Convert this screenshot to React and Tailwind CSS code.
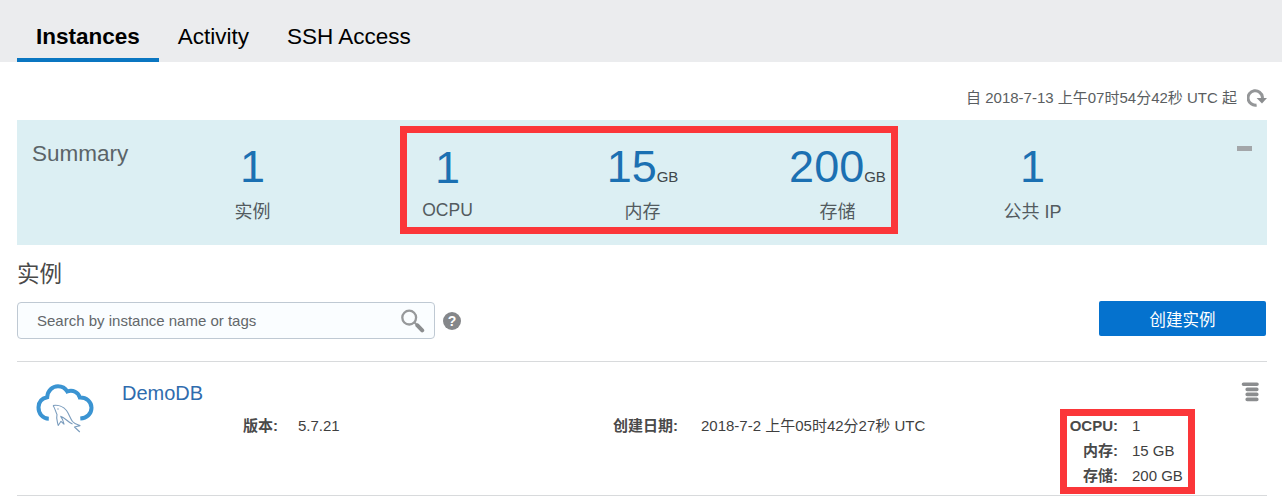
const metrics = [
  { value: '1', label: '实例' },
  { value: '1', label: 'OCPU', latin: true },
  { value: '15', unit: 'GB', label: '内存' },
  { value: '200', unit: 'GB', label: '存储' },
  { value: '1', label: '公共 IP' },
];

function Tabs() {
  return (
    <nav className="flex h-[62px] bg-[#ebecee] pl-[17px] text-[22.5px] leading-7 text-black">
      <div className="border-b-4 border-[#0a76c1] px-[19px] pt-[23px] font-bold">Instances</div>
      <div className="pr-[19px] pl-[19px] pt-[23px]">Activity</div>
      <div className="pl-[19px] pt-[23px]">SSH Access</div>
    </nav>
  );
}

function RefreshIcon() {
  return (
    <svg className="h-5 w-5" viewBox="0 0 20 20" fill="none">
      <path d="M9.6 17A7.2 7.2 0 1 1 15.4 9V11" stroke="#949698" strokeWidth="3" />
      <path d="M9.6 10H20L15 15.4Z" fill="#8b8d8f" />
    </svg>
  );
}

function SearchIcon() {
  return (
    <svg className="h-6 w-6" viewBox="0 0 24 24" fill="none">
      <circle cx="8.2" cy="8.6" r="6.9" stroke="#97999b" strokeWidth="2.3" />
      <path d="M13.5 13.5L16 16" stroke="#97999b" strokeWidth="2" />
      <path d="M16.4 16.4L21.2 21.4" stroke="#8b8d8f" strokeWidth="4" strokeLinecap="round" />
    </svg>
  );
}

function CloudIcon() {
  return (
    <svg className="h-[52px] w-[60px]" viewBox="0 0 60 52" fill="none">
      <path
        d="M13.8 36.8C7.5 36.6 3.4 31.4 3.5 25.3C3.6 19.5 7.5 16.2 12.2 15.2C12.6 8.5 17.4 4.3 23 4.3C27.2 4.3 30.3 6.2 32.3 9.5C37.8 7.4 43.3 10.4 44.8 15.4C51.3 15.2 56.5 19.6 56.5 25.8C56.5 31.7 51.9 36.2 45.3 36.6"
        stroke="#3b94d2"
        strokeWidth="4"
      />
      <path
        d="M18 23.5C23 22.6 28.5 24.8 31.5 28.5C34 32 35 36 37.5 39.5C39.5 42 42 42.5 45 43.6L39.5 45L44.8 50M18 23.5C20 26 20.5 29.5 22 32.5C20.8 36.8 22.5 40 23.2 43.5L26 39.3L29 42.2C28.3 38.5 27 36 25.5 34.2M25.5 34.2C30 35.5 32.5 40 37.5 42"
        stroke="#7a9cbd"
        strokeWidth="1.1"
        strokeLinejoin="round"
      />
      <circle cx="23" cy="27" r="0.7" fill="#7a9cbd" />
    </svg>
  );
}

function MenuIcon() {
  return (
    <svg className="h-5 w-[18px]" viewBox="0 0 18 20" stroke="#8b8d8f" strokeWidth="3.6" strokeLinecap="round">
      <path d="M2.5 2.3H16M6.2 7.4H15.8M6.2 12.4H15.8M6.2 17.4H15.8" />
    </svg>
  );
}

function Summary() {
  return (
    <section className="relative mr-[15px] ml-[17px] flex h-[125px] bg-[#dceff3]">
      <h2 className="w-[138px] pt-5 pl-[15px] text-[22.5px] leading-7 text-[#5b6468]">Summary</h2>
      {metrics.map((m, i) => (
        <div key={i} className="w-[195px] text-center">
          <div className={m.latin ? 'pt-[25px] text-[45px] leading-[45px] text-[#1b70b2]' : 'pt-6 text-[45px] leading-[45px] text-[#1b70b2]'}>
            {m.value}
            {m.unit && <span className="text-[15px] leading-none text-[#40474b]">{m.unit}</span>}
          </div>
          <div className={m.latin ? 'mt-2 text-[17.5px] leading-6 text-[#535b5f]' : 'mt-[11px] text-[18px] leading-6 text-[#535b5f]'}>
            {m.label}
          </div>
        </div>
      ))}
      <div className="mt-[26px] ml-auto mr-[15px] h-[5px] w-[15px] bg-[#a3a6a9]" />
      <div className="absolute top-[6px] left-[383px] h-[108px] w-[498px] border-[7px] border-[#fb3639]" />
    </section>
  );
}

function Field({ label, value }) {
  return (
    <>
      <dt className="text-right font-bold text-[#4a4a4a]">{label}</dt>
      <dd className="text-[#3f3f3f]">{value}</dd>
    </>
  );
}

export default function App() {
  return (
    <main className="h-[504px] w-[1282px] overflow-hidden bg-white font-['Liberation_Sans','Noto_Sans_CJK_SC',sans-serif]">
      <Tabs />
      <div className="flex h-[58px] justify-end pt-[26px] pr-[15px] text-[15px] leading-5 text-[#5a5e61]">
        <span className="mr-[10px]">自 2018-7-13 上午07时54分42秒 UTC 起</span>
        <RefreshIcon />
      </div>
      <Summary />
      <h2 className="h-[57px] pt-4 pl-[17px] text-[22.5px] leading-7 text-[#4a4a4a]">实例</h2>
      <div className="flex h-[59px] pr-4 pl-[17px]">
        <div className="flex h-[37px] w-[418px] items-center justify-between rounded border border-[#bfc9d3] bg-[#fafdff] pr-[9px] pl-[19px] text-[15px] text-[#63676a]">
          <span className="pt-0.5">Search by instance name or tags</span>
          <SearchIcon />
        </div>
        <div className="mt-[10px] ml-2 flex h-[18px] w-[18px] items-center justify-center rounded-full bg-[#85878a] text-[14px] leading-none font-bold text-white">
          ?
        </div>
        <button className="-mt-px ml-auto h-[35px] w-[167px] rounded-[2px] bg-[#0572ce] pt-0.5 text-[16.5px] leading-6 text-white">
          创建实例
        </button>
      </div>
      <article className="relative mr-[15px] ml-[17px] flex h-[135px] border-t border-b border-[#d8dadc]">
        <div className="w-[105px] pt-5 pl-[17.5px]">
          <CloudIcon />
        </div>
        <div className="flex-1 pt-[19px]">
          <h3 className="text-[20px] leading-6 text-[#2f6cae]">DemoDB</h3>
          <div className="mt-2 flex text-[15px] leading-[25px]">
            <dl className="grid w-[370px] grid-cols-[156px_auto] gap-x-5">
              <Field label="版本:" value="5.7.21" />
            </dl>
            <dl className="grid w-[450px] grid-cols-[186px_auto] gap-x-[23px]">
              <Field label="创建日期:" value="2018-7-2 上午05时42分27秒 UTC" />
            </dl>
            <dl className="grid w-[280px] grid-cols-[176px_auto] gap-x-[14px]">
              <Field label="OCPU:" value="1" />
              <Field label="内存:" value="15 GB" />
              <Field label="存储:" value="200 GB" />
            </dl>
          </div>
        </div>
        <div className="absolute top-5 right-2">
          <MenuIcon />
        </div>
        <div className="absolute top-[47px] left-[1043px] h-[85px] w-[135px] border-[7px] border-[#fb3639]" />
      </article>
    </main>
  );
}
